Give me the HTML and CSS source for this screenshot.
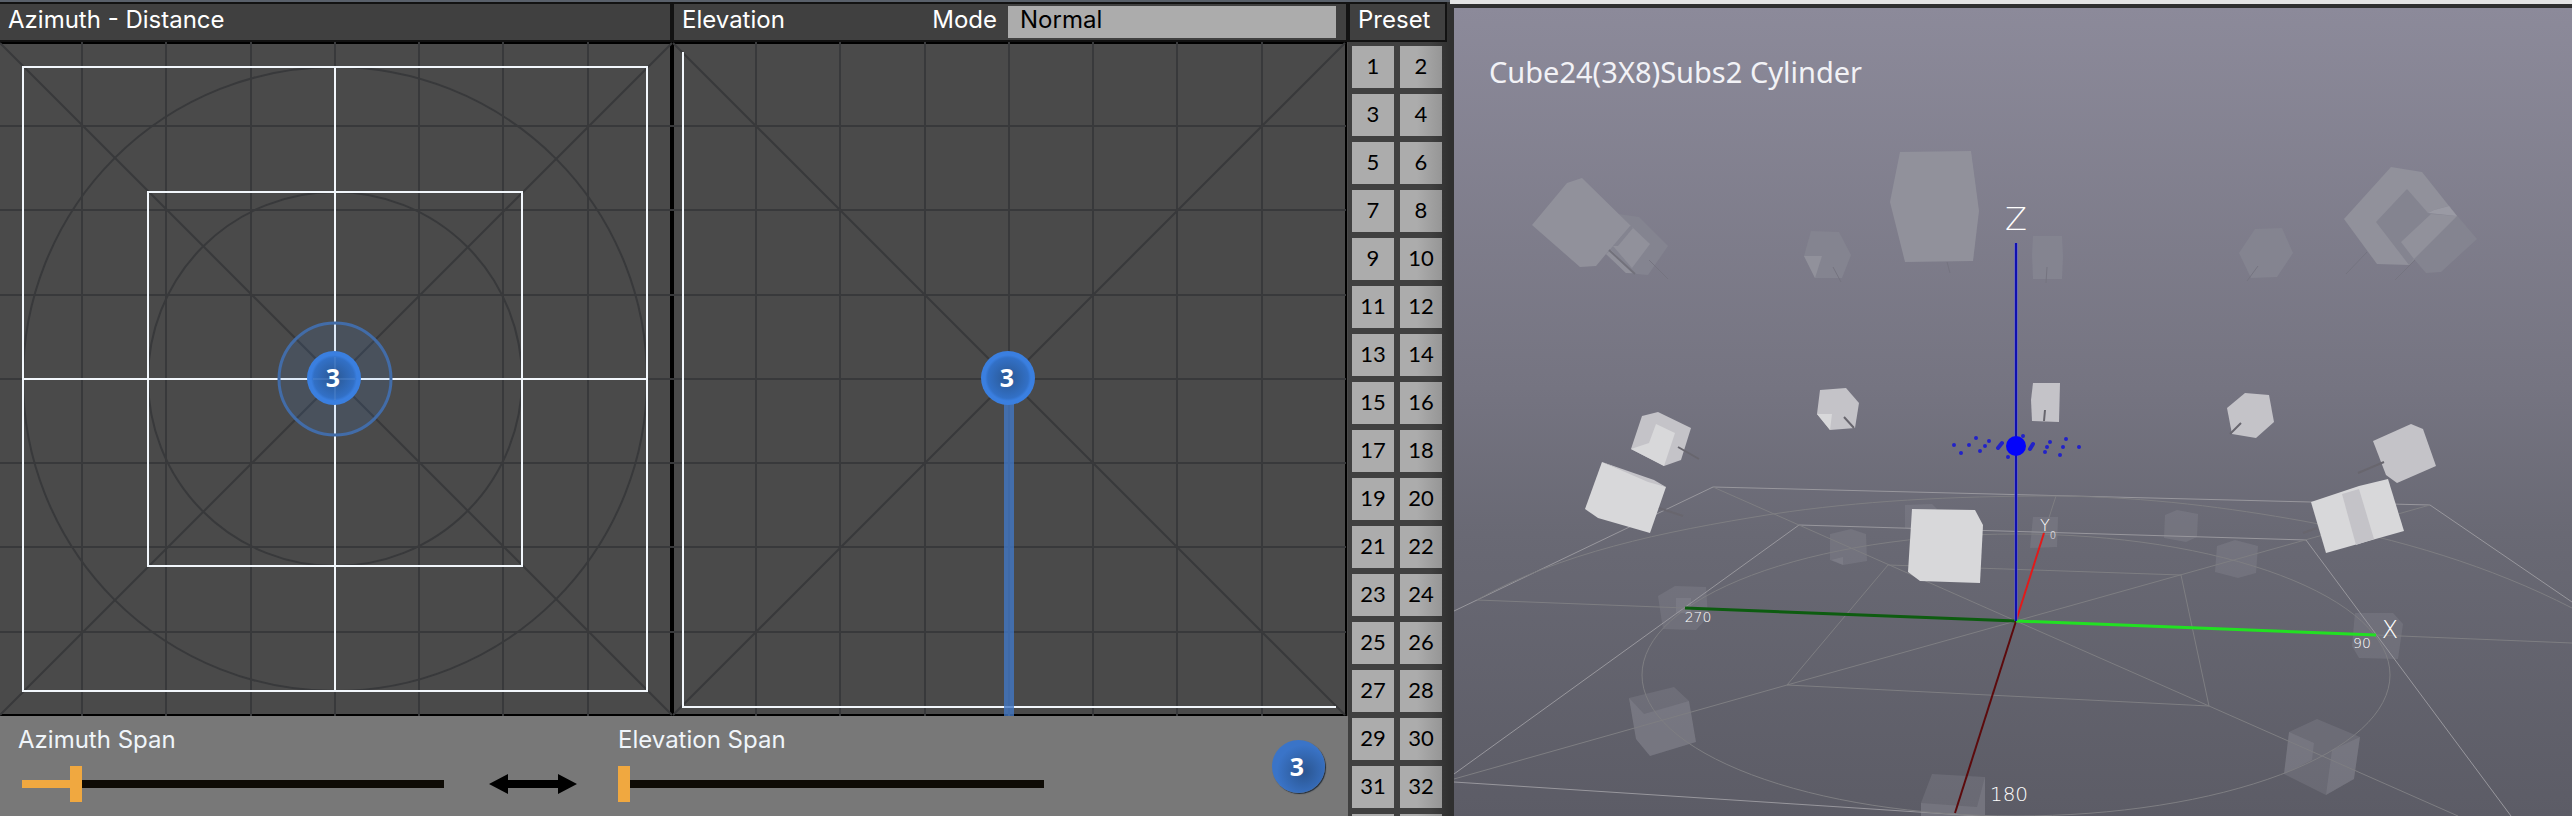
FILE: index.html
```html
<!DOCTYPE html>
<html lang="en">
<head>
<meta charset="utf-8">
<title>Source Panner</title>
<link rel="stylesheet" href="styles.css">
</head>
<body>
<main class="app">
  <section class="editor">
    <div class="pane azimuth">
      <header class="bar"><h2>Azimuth - Distance</h2></header>
      <svg class="plot" viewBox="0 42 672 674" preserveAspectRatio="xMidYMid slice" role="img" aria-label="Azimuth and distance">
        <defs>
          <radialGradient id="blue">
            <stop offset="0" stop-color="#2a5792"/>
            <stop offset=".75" stop-color="#3270c6"/>
            <stop offset=".85" stop-color="#3a7fe0"/>
            <stop offset="1" stop-color="#3a7fe0"/>
          </radialGradient>
        </defs>
        <path class="frame" d="M0 43H672M0 715H672"/>
        <path class="frame thick" d="M672 42V716"/>
        <g class="grid">
          <path d="M82 42V716M166 42V716M251 42V716M335 42V716M419 42V716M503 42V716M588 42V716"/>
          <path d="M0 126H672M0 210H672M0 295H672M0 379H672M0 463H672M0 547H672M0 632H672"/>
          <path d="M0 43L672 715M672 43L0 715"/>
          <circle cx="335" cy="379" r="312"/>
          <circle cx="335" cy="379" r="187"/>
        </g>
        <path class="guide" d="M23 67H647V691H23ZM148 192H522V566H148ZM335 67V691M23 379H647"/>
        <circle class="halo" cx="335" cy="379" r="56"/>
        <circle class="ball" cx="334" cy="378" r="27"/>
        <path class="ghost" d="M335 357V400M313 379H355"/>
        <text class="num" x="333" y="387">3</text>
      </svg>
    </div>
    <div class="pane elevation">
      <header class="bar">
        <h2>Elevation</h2>
        <label for="mode">Mode</label>
        <select id="mode"><option>Normal</option></select>
      </header>
      <svg class="plot" viewBox="672 42 676 674" preserveAspectRatio="xMidYMid slice" role="img" aria-label="Elevation">
        <path class="frame" d="M672 43H1347M672 715H1347"/>
        <path class="frame thick" d="M672 42V716"/>
        <path class="frame" d="M1346 42V716"/>
        <g class="grid">
          <path d="M756 42V716M840 42V716M925 42V716M1009 42V716M1093 42V716M1177 42V716M1262 42V716"/>
          <path d="M672 126H1346M672 210H1346M672 295H1346M672 379H1346M672 463H1346M672 547H1346M672 632H1346"/>
          <path d="M673 43L1345 715M1345 43L673 715"/>
        </g>
        <path class="guide" d="M683 52V707H1336"/>
        <path class="stem" d="M1009 400V716"/>
        <circle class="ball" cx="1008" cy="378" r="27"/>
        <text class="num" x="1007" y="387">3</text>
      </svg>
    </div>
    <footer class="spans">
      <div class="field first">
        <label for="azspan">Azimuth Span</label>
        <input id="azspan" type="range" min="0" max="360" value="42" style="--fill:12%">
      </div>
      <svg class="link" viewBox="0 0 88 20" aria-hidden="true"><path d="M0 10L19 0V6H69V0L88 10L69 20V14H19V20Z"/></svg>
      <div class="field">
        <label for="elspan">Elevation Span</label>
        <input id="elspan" type="range" min="0" max="180" value="0" style="--fill:0%">
      </div>
      <button class="source" type="button">3</button>
    </footer>
  </section>

  <section class="presets">
    <header class="bar"><h2>Preset</h2></header>
    <div class="keys">
      <button>1</button><button>2</button><button>3</button><button>4</button>
      <button>5</button><button>6</button><button>7</button><button>8</button>
      <button>9</button><button>10</button><button>11</button><button>12</button>
      <button>13</button><button>14</button><button>15</button><button>16</button>
      <button>17</button><button>18</button><button>19</button><button>20</button>
      <button>21</button><button>22</button><button>23</button><button>24</button>
      <button>25</button><button>26</button><button>27</button><button>28</button>
      <button>29</button><button>30</button><button>31</button><button>32</button>
      <button></button><button></button>
    </div>
  </section>

  <section class="view">
    <svg class="scene" viewBox="1454 8 1118 808" preserveAspectRatio="xMinYMin slice" role="img" aria-label="Room view">
      <g class="far">
        <path class="b" d="M1618 214L1639 217L1668 246L1648 275L1626 273L1606 254Z"/>
        <path class="a" d="M1567 183L1582 178L1631 226L1613 246L1606 254L1596 266L1580 267L1532 225Z"/>
        <path class="a" d="M1632 227L1650 244L1632 268L1613 246Z"/>
        <path class="b" d="M1630 226L1633 228L1618 246L1613 246Z"/>
        <path class="a" d="M1606 254L1611 250L1634 273L1626 273Z"/>
        <path class="b" d="M1811 231L1839 232L1851 255L1842 278L1815 278L1804 256Z"/>
        <path class="a" d="M1804 256H1822L1815 278Z"/>
        <path class="a" d="M1900 152L1971 151L1979 211L1973 261L1905 262L1890 202Z"/>
        <path class="b" d="M2033 236H2062L2063 257L2062 279H2033L2032 255Z"/>
        <path class="b" d="M2255 229L2282 228L2293 253L2277 277L2251 278L2239 253Z"/>
        <path class="a" d="M2391 167L2422 172L2457 216L2409 265L2377 264L2344 219Z"/>
        <path class="b" d="M2407 189L2428 213L2434 210L2449 206L2477 239L2441 272L2426 273L2414 259L2409 265L2376 222Z"/>
        <path class="a" d="M2431 214L2457 216L2414 259L2401 242Z"/>
        <path class="hi" d="M2428 213L2434 210L2449 206L2457 216Z"/>
        <path class="stick dim" d="M1609 250L1635 274"/>
        <path class="stick faint" d="M1649 260L1668 279M1833 267L1841 282M1947 262L1950 273M2047 267L2046 283M2258 266L2247 281M2367 252L2346 274M2415 260L2395 280"/>
      </g>
      <g class="low">
        <path d="M1830 534L1851 529L1866 534L1867 561L1843 565L1830 560Z"/>
        <path d="M1831 560L1843 557V565Z"/>
        <path d="M1658 596L1675 586L1706 587L1708 617L1696 630L1663 629Z"/>
        <path d="M1676 598H1691V613H1676Z"/>
        <path d="M1629 698L1674 687L1689 701L1696 742L1650 756L1636 739Z"/>
        <path d="M1629 698L1644 714L1689 701L1696 742L1650 756L1636 739Z"/>
        <path d="M1932 774L1985 777V816H1921V803Z"/>
        <path d="M1921 803L1977 807L1985 777V816H1921Z"/>
        <path d="M2033 517L2058 517L2057 547L2030 548Z"/>
        <path d="M1905 505L1932 504L1937 509L1912 530L1905 528Z"/>
        <path d="M2165 515L2177 510L2198 514L2197 537L2186 542L2164 538Z"/>
        <path d="M2217 546L2235 540L2258 546L2256 573L2238 578L2215 572Z"/>
        <path d="M2355 613L2393 613L2403 624L2398 659L2359 658L2352 646Z"/>
        <path d="M2289 732L2317 719L2360 737L2354 779L2326 795L2284 774Z"/>
        <path d="M2289 732L2314 743L2312 760L2284 774ZM2332 750L2360 737L2354 779L2326 795Z"/>
      </g>
      <g class="floor">
        <path class="edge" d="M1454 611L1713 487L2430 505L2572 602M1454 774L1799 525L2306 540L2511 816M1454 782L1980 816"/>
        <path d="M1888 565L2181 575L2209 706L1787 685Z"/>
        <path d="M1713 487L2016 621L2209 706L2458 816M2430 505L2016 621L1787 685L1454 779"/>
        <path d="M1477 600L1685 608M2376 635L2572 643M2044 533L2056 496"/>
        <ellipse cx="2016" cy="675" rx="374" ry="141"/>
        <path d="M1477 600C1560 553 1660 532 1773 514C1860 501 1950 496 2056 496C2150 497 2230 508 2303 521C2400 539 2490 566 2572 608"/>
      </g>
      <g class="near">
        <path class="b" d="M1642 416L1658 412L1691 428L1681 460L1664 466L1631 449Z"/>
        <path class="a" d="M1656 424L1675 433L1664 466L1631 449L1649 443Z"/>
        <path class="a" d="M1602 462L1666 487L1650 533L1598 518L1585 509Z"/>
        <path class="b" d="M1602 462L1654 480L1666 487L1648 482Z"/>
        <path class="b" d="M1820 390L1846 388L1859 403L1855 428L1830 430L1817 414Z"/>
        <path class="a" d="M1817 414H1832L1830 430Z"/>
        <path class="b" d="M2033 383H2060L2059 422L2032 421L2031 400Z"/>
        <path class="b" d="M2245 393L2269 395L2274 422L2256 438L2232 434L2227 408Z"/>
        <path class="b" d="M2411 424L2423 429L2436 466L2397 483L2386 475L2373 441Z"/>
        <path class="a" d="M2311 502L2359 486L2388 479L2404 531L2326 553Z"/>
        <path class="b" d="M2342 494L2359 489L2374 539L2356 545Z"/>
        <path class="a" d="M1912 509L1975 510L1983 525L1980 583L1920 581L1908 572Z"/>
        <path class="stick" d="M1678 447L1699 459M1659 508L1683 516M1844 417L1854 428M2045 410L2044 421M2241 423L2230 434M2384 462L2358 473M2317 528L2303 533"/>
      </g>
      <g class="axes">
        <path stroke="#0d5c10" d="M1685 608L2016 621"/>
        <path stroke="#5c0a0c" class="thin" d="M2016 621L1955 813"/>
        <path stroke="#e21a1a" class="thin" d="M2016 621L2044 533"/>
        <path stroke="#22e022" d="M2016 621L2376 635"/>
        <path stroke="#5c5ce0" d="M2016 243V621"/>
        <path class="thin" stroke="#1010b0" d="M2016 243V621"/>
      </g>
      <g class="dots">
        <circle class="core" cx="2016" cy="446" r="10"/>
        <path d="M1954 445h0M1961 453h0M1969 445h0M1976 438h0M1980 451h0M1985 446h0M1989 441h0M1998 448l4-5M2008 457h0M2023 436h0M2030 449l3-5M2045 452h0M2047 447h0M2050 442h0M2060 455h0M2063 447h0M2066 439h0M2079 447h0"/>
      </g>
      <g class="marks">
        <text x="2016" y="230" font-size="32">Z</text>
        <text x="2045" y="531" font-size="16">Y</text>
        <text x="2390" y="638" font-size="24">X</text>
        <text x="2053" y="539" font-size="10">0</text>
        <text x="2362" y="648" font-size="14">90</text>
        <text x="1698" y="622" font-size="14">270</text>
        <text x="2009" y="801" font-size="20">180</text>
      </g>
      <text class="title" x="1489" y="83">Cube24(3X8)Subs2 Cylinder</text>
    </svg>
  </section>
</main>
</body>
</html>
```

FILE: styles.css
```css
* { box-sizing: border-box; }
body {
  margin: 0;
  font-family: Inter, "Noto Sans", sans-serif;
  font-size: 24px;
  color: #fff;
  background: #303030;
}
h2 { margin: 0; font-size: inherit; font-weight: 400; }
.app {
  display: grid;
  grid-template-columns: 1348fr 102px 1122fr;
  grid-template-rows: 100vh;
  height: 100vh;
  overflow: hidden;
}
.editor {
  display: grid;
  grid-template-columns: 672fr 676fr;
  grid-template-rows: 1fr 100px;
  border-top: 2px solid #59606a;
  min-height: 0;
}
.pane { display: flex; flex-direction: column; min-width: 0; min-height: 0; }
.bar {
  flex: none;
  display: flex;
  align-items: center;
  height: 40px;
  padding: 0 12px 0 8px;
  background: #404040;
  border: solid #121212;
  border-width: 2px 2px 2px 0;
}
.bar h2, .bar label { line-height: 30px; padding-bottom: 4px; }
.elevation .bar { padding-right: 10px; border-left-width: 2px; }
.bar label { margin-left: auto; padding-right: 11px; }
select {
  appearance: none;
  width: 328px;
  height: 32px;
  padding: 0 12px 4px;
  border: 0;
  border-radius: 0;
  background: #acacac;
  color: #000;
  font: inherit;
  line-height: 28px;
}
.plot { display: block; flex: 1; width: 100%; min-height: 0; background: #4a4a4a; }
.plot path, .plot circle { fill: none; stroke-width: 2; }
.plot .frame { stroke: #000; }
.plot .thick { stroke-width: 4; }
.plot .grid { stroke: #38393b; }
.plot .guide { stroke: #f2f7fc; }
.plot .halo { fill: rgba(62, 128, 220, .12); stroke: #426ca8; stroke-width: 3; }
.plot .ball { fill: url(#blue); }
.plot .ghost { stroke: #5a8cd0; stroke-width: 1; opacity: .7; }
.plot .stem { stroke: #4177c4; stroke-width: 10; opacity: .8; }
.num, .source { font-family: "Noto Sans", sans-serif; font-weight: 700; font-size: 25px; }
.num { fill: #fff; text-anchor: middle; }
.spans {
  grid-column: 1 / -1;
  display: flex;
  align-items: flex-start;
  padding: 9px 23px 0 18px;
  background: #787878;
}
.field { flex: 0 1 426px; min-width: 0; }
.field label { display: block; line-height: 30px; color: #f0f5fa; }
input[type="range"] {
  appearance: none;
  display: block;
  width: 100%;
  height: 36px;
  margin: 11px 0 0;
  background: linear-gradient(90deg, #f0a840 var(--fill), #0e0b05 var(--fill)) center / 100% 8px no-repeat;
}
.first input { width: calc(100% - 4px); margin-left: 4px; }
input[type="range"]::-webkit-slider-thumb {
  appearance: none;
  width: 12px;
  height: 36px;
  background: #f0a840;
}
.link { flex: none; width: 88px; height: 20px; margin: 49px 41px 0 45px; }
.source {
  width: 53px;
  height: 53px;
  margin: 15px 0 0 auto;
  padding: 0 3px 2px 0;
  border: 0;
  border-radius: 50%;
  background: radial-gradient(circle at 60% 60%, #2a5590, #3a74c8 60%);
  box-shadow: 1px 1px 1px #222c38;
  color: #fff;
}
.presets {
  display: flex;
  flex-direction: column;
  min-height: 0;
  border-top: 2px solid #59606a;
  background: linear-gradient(90deg, #404040 80%, #303030);
}
.presets .bar { border-width: 2px; margin-right: 3px; }
.keys {
  display: grid;
  grid-template-columns: 42px 42px;
  grid-auto-rows: 42px;
  gap: 6px;
  padding: 4px;
  min-height: 0;
  overflow: hidden;
}
.keys button {
  padding: 0 0 4px;
  border: 0;
  background: #acacac;
  color: #000;
  font-family: Lato, "Noto Sans", sans-serif;
  font-size: 22px;
}
.keys button:nth-child(even) { background: linear-gradient(90deg, #acacac 40%, #969696); }
.view {
  min-width: 0;
  min-height: 0;
  padding: 4px 0 0 4px;
  background: #303030;
  border-top: 4px solid #e4e4e4;
}
.scene {
  display: block;
  width: 100%;
  height: 100%;
  background: linear-gradient(#8c8a9a, #757481 47%, #696974 65%, #5c5c66);
}
.far .a { fill: #91919b; }
.far .b { fill: #848490; }
.far .hi { fill: #9a9aa4; }
.near .a { fill: #d8d8da; }
.near .b { fill: #c4c3c8; }
.low path { fill: #a2a2a8; fill-opacity: .2; }
.stick { fill: none; stroke: #68666e; stroke-width: 2; }
.far .faint { stroke: #757480; stroke-width: 1; }
.far .dim { stroke: #72717b; }
.floor { fill: none; stroke: #7e7e82; stroke-width: 1; }
.floor .edge { stroke: #98979d; }
.axes { fill: none; stroke-width: 3; }
.axes .thin { stroke-width: 2; }
.dots { fill: none; stroke: #2222c8; stroke-width: 4; stroke-linecap: round; }
.dots .core { fill: #0404fa; stroke: none; }
.marks { fill: #fff; font-family: "DejaVu Sans", sans-serif; font-weight: 200; text-anchor: middle; }
.title { fill: #f2f2f6; font-family: "Noto Sans", sans-serif; font-size: 29px; }
```
